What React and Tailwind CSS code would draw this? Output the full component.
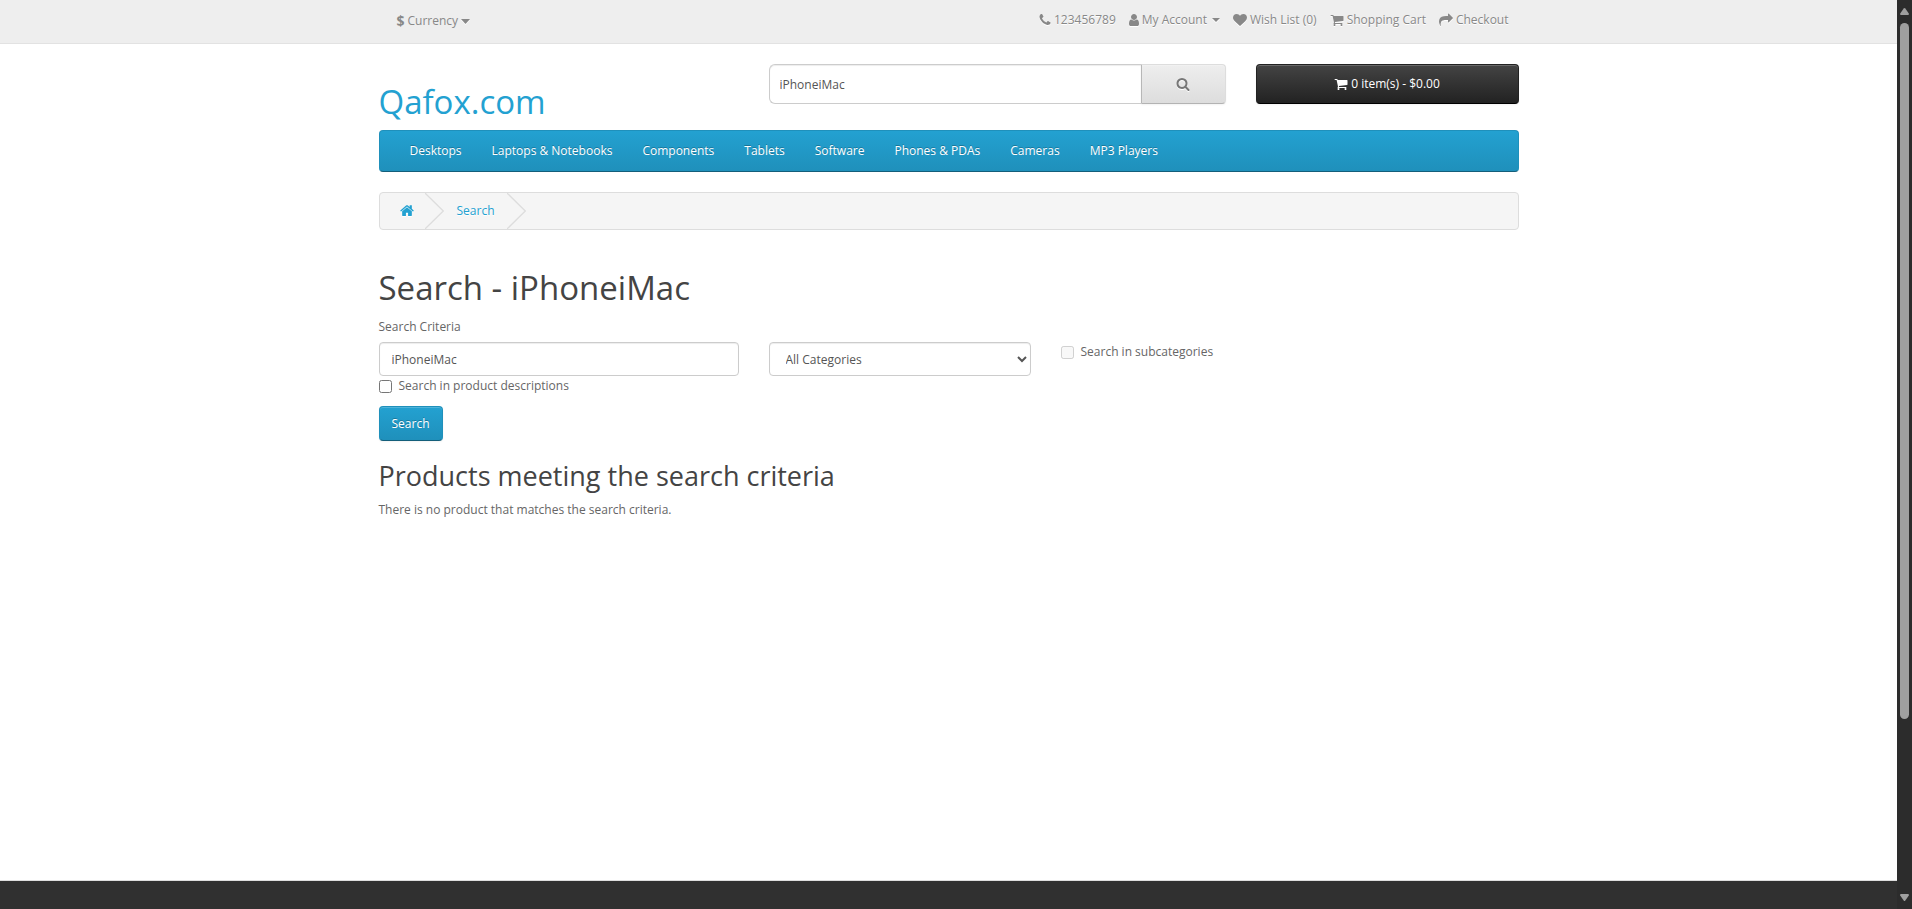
import React from "react";

const PATHS = {
  phone:
    "M1408 1112q0 27-10 70.5t-21 68.5q-21 50-122 106-94 51-186 51-27 0-53-3.5t-57.5-12.5-47-14.5-55.5-20.5-49-18q-98-35-175-83-127-79-264-216t-216-264q-48-77-83-175-3-9-18-49t-20.5-55.5-14.5-47-12.5-57.5-3.5-53q0-92 51-186 56-101 106-122 25-11 68.5-21t70.5-10q14 0 21 3 18 6 53 76 11 19 30 54t35 63.5 31 53.5q3 4 17.5 25t21.5 35.5 7 28.5q0 20-28.5 50t-62 55-62 53-28.5 46q0 9 5 22.5t8.5 20.5 14 24 11.5 19q76 137 174 235t235 174q2 1 19 11.5t24 14 20.5 8.5 22.5 5q18 0 46-28.5t53-62 55-62 50-28.5q14 0 28.5 7t35.5 21.5 25 17.5q25 15 53.5 31t63.5 35 54 30q70 35 76 53 3 7 3 21z",
  user: "M1536 1399q0 109-62.5 187t-150.5 78h-854q-88 0-150.5-78t-62.5-187q0-85 8.5-160.5t31.5-152 58.5-131 94-89 134.5-34.5q131 128 313 128t313-128q76 0 134.5 34.5t94 89 58.5 131 31.5 152 8.5 160.5zm-256-887q0 159-112.5 271.5t-271.5 112.5-271.5-112.5-112.5-271.5 112.5-271.5 271.5-112.5 271.5 112.5 112.5 271.5z",
  heart:
    "M896 1664q-26 0-44-18l-624-602q-10-8-27.5-26t-55.5-65.5-68-97.5-53.5-121-23.5-138q0-220 127-344t351-124q62 0 126.5 21.5t120 58 95.5 68.5 76 68q36-36 76-68t95.5-68.5 120-58 126.5-21.5q224 0 351 124t127 344q0 221-229 450l-623 600q-18 18-44 18z",
  cart: "M704 1536q0 52-38 90t-90 38-90-38-38-90 38-90 90-38 90 38 38 90zm896 0q0 52-38 90t-90 38-90-38-38-90 38-90 90-38 90 38 38 90zm128-1088v512q0 24-16.5 42.5t-40.5 21.5l-1044 122q13 60 13 70 0 16-24 64h920q26 0 45 19t19 45-19 45-45 19h-1024q-26 0-45-19t-19-45q0-11 8-31.5t16-36 21.5-40 15.5-29.5l-177-823h-204q-26 0-45-19t-19-45 19-45 45-19h256q16 0 28.5 6.5t19.5 15.5 13 24.5 8 26 5.5 29.5 4.5 26h1201q26 0 45 19t19 45z",
  share:
    "M1792 640q0 26-19 45l-512 512q-19 19-45 19t-45-19-19-45v-256h-224q-98 0-175.5 6t-154 21.5-133 42.5-105.5 69.5-80 101-48.5 138.5-17.5 181q0 55 5 123 0 6 2.5 23.5t2.5 26.5q0 15-8.5 25t-23.5 10q-16 0-28-17-7-9-13-22t-13.5-30-10.5-24q-127-285-127-451 0-199 53-333 162-403 875-403h224v-256q0-26 19-45t45-19 45 19l512 512q19 19 19 45z",
  search:
    "M1216 832q0-185-131.5-316.5t-316.5-131.5-316.5 131.5-131.5 316.5 131.5 316.5 316.5 131.5 316.5-131.5 131.5-316.5zm512 832q0 52-38 90t-90 38q-54 0-90-38l-343-342q-179 124-399 124-143 0-273.5-55.5t-225-150-150-225-55.5-273.5 55.5-273.5 150-225 225-150 273.5-55.5 273.5 55.5 225 150 150 225 55.5 273.5q0 220-124 399l343 343q37 37 37 90z",
  home: "M1472 992v480q0 26-19 45t-45 19h-384v-384h-256v384h-384q-26 0-45-19t-19-45v-480q0-1 .5-3t.5-3l575-474 575 474q1 2 1 6zm223-69l-62 74q-8 9-21 11h-3q-13 0-21-7l-692-577-692 577q-12 8-24 7-13-2-21-11l-62-74q-8-10-7-23.5t11-21.5l719-599q32-26 76-26t76 26l244 204v-195q0-14 9-23t23-9h192q14 0 23 9t9 23v408l219 182q10 8 11 21.5t-7 23.5z",
};

const BOXES = {
  phone: "0 -128 1408 1792",
  user: "256 0 1280 1792",
  heart: "0 0 1792 1792",
  cart: "0 0 1792 1792",
  share: "0 0 1792 1792",
  search: "0 128 1792 1792",
  home: "64 0 1664 1664",
};

function Icon({ name, className = "" }) {
  return (
    <svg viewBox={BOXES[name]} className={`h-3.5 shrink-0 fill-current ${className}`} aria-hidden="true">
      <path d={PATHS[name]} />
    </svg>
  );
}

const glow = "drop-shadow-[0_1px_0_#ffffff]";

const topLinks = [
  { icon: "phone", label: "123456789", width: "w-3" },
  { icon: "user", label: "My Account", width: "w-2.5", caret: true },
  { icon: "heart", label: "Wish List (0)", width: "w-3.5" },
  { icon: "cart", label: "Shopping Cart", width: "w-3.5" },
  { icon: "share", label: "Checkout", width: "w-3.5" },
];

const categories = [
  "Desktops",
  "Laptops & Notebooks",
  "Components",
  "Tablets",
  "Software",
  "Phones & PDAs",
  "Cameras",
  "MP3 Players",
];

function Chevron() {
  return (
    <svg viewBox="0 0 19 36" className="h-9 w-[19px] fill-none stroke-[#dddddd] stroke-[1.3]" aria-hidden="true">
      <path d="M0 0 L18.3 18 L0 36" />
    </svg>
  );
}

function TopBar() {
  return (
    <div className="border-b border-[#e2e2e2] bg-[#eeeeee] text-[#888888]">
      <div className="mx-auto flex h-[43px] w-full max-w-[1140px] justify-between pr-2.5 pl-[18px] [text-shadow:0_1px_0_#ffffff]">
        <button type="button" className="flex h-10 items-center gap-[3px] pt-0.5">
          <strong className="text-sm leading-5 font-bold">$</strong>
          <span>Currency</span>
          <svg viewBox="0 0 9 5" className={`h-[5px] w-[9px] fill-current ${glow}`} aria-hidden="true">
            <path d="M0 0H9L5 4.5Q4.5 5 4 4.5Z" />
          </svg>
        </button>
        <nav className="flex h-10 items-center gap-[13px]">
          {topLinks.map((l) => (
            <a key={l.label} href="#" className="flex items-center gap-[3px]">
              <Icon name={l.icon} className={`${l.width} ${glow}`} />
              <span>{l.label}</span>
              {l.caret && (
                <svg viewBox="0 0 8 4" className={`ml-0.5 h-1 w-2 fill-current ${glow}`} aria-hidden="true">
                  <path d="M0 0H8L4 4Z" />
                </svg>
              )}
            </a>
          ))}
        </nav>
      </div>
    </div>
  );
}

function Header() {
  return (
    <header className="grid grid-cols-[360fr_457fr_263fr] gap-[30px] pt-5">
      <h1 className="flex h-[66px] items-end text-[33px] leading-9 text-[#23a1d1]">
        <a href="#" className="pb-2.5">Qafox.com</a>
      </h1>
      <form className="flex h-10" onSubmit={(e) => e.preventDefault()}>
        <input
          aria-label="Search"
          defaultValue="iPhoneiMac"
          className="min-w-0 flex-1 rounded-l-md border border-r-0 border-[#cccccc] bg-white px-2.5 pt-0.5 text-[#555555] shadow-[inset_0_1px_1px_rgba(0,0,0,0.075)] outline-none"
        />
        <button
          type="submit"
          aria-label="Search"
          className="flex w-[85px] items-center justify-center rounded-r border border-t-[#dddddd] border-r-[#dddddd] border-b-[#b3b3b3] border-l-[#b7b7b7] bg-linear-to-b from-[#eeeeee] to-[#dddddd] pt-0.5 text-[#777777] shadow-[inset_0_1px_0_rgba(255,255,255,0.2),0_1px_2px_rgba(0,0,0,0.05)]"
        >
          <Icon name="search" className={`w-3.5 ${glow}`} />
        </button>
      </form>
      <button
        type="button"
        className="flex h-10 items-center justify-center gap-[3px] rounded border border-[#222222] border-b-black bg-linear-to-b from-[#444444] to-[#222222] text-white shadow-[inset_0_1px_0_rgba(255,255,255,0.2),0_1px_2px_rgba(0,0,0,0.05)]"
      >
        <Icon name="cart" className="w-3.5" />
        <span>0 item(s) - $0.00</span>
      </button>
    </header>
  );
}

function CategoryMenu() {
  return (
    <nav className="flex h-[42px] items-center rounded border border-[#1f90bb] border-b-[#145e7a] bg-linear-to-b from-[#23a1d1] to-[#1f90bb] px-[15px] text-white [text-shadow:0_-1px_0_rgba(0,0,0,0.25)]">
      {categories.map((c) => (
        <a key={c} href="#" className="px-[15px]">
          {c}
        </a>
      ))}
    </nav>
  );
}

function Breadcrumb() {
  return (
    <ol className="mt-5 flex h-[38px] items-center rounded border border-[#dddddd] bg-[#f5f5f5] pl-5 text-[#23a1d1]">
      <li className="flex items-center gap-[11px]">
        <a href="#" aria-label="Home" className={`pb-[3px] ${glow}`}>
          <Icon name="home" className="w-3.5" />
        </a>
        <Chevron />
      </li>
      <li className="flex items-center gap-3 pl-[13px]">
        <a href="#" className="[text-shadow:0_1px_0_#ffffff]">Search</a>
        <Chevron />
      </li>
    </ol>
  );
}

const field =
  "h-[34px] w-full rounded border border-[#cccccc] bg-white text-[#555555] shadow-[inset_0_1px_1px_rgba(0,0,0,0.075)] outline-none";

function SearchPage() {
  return (
    <main className="mt-10">
      <h1 className="text-[33px] leading-9 text-[#444444]">Search - iPhoneiMac</h1>
      <form onSubmit={(e) => e.preventDefault()}>
        <label htmlFor="criteria" className="mt-[11px] block pb-[5px]">
          Search Criteria
        </label>
        <div className="grid grid-cols-[360fr_262fr_458fr] items-start gap-[30px]">
          <input id="criteria" defaultValue="iPhoneiMac" className={`${field} px-3`} />
          <select aria-label="Category" className={`${field} px-3`}>
            <option>All Categories</option>
          </select>
          <label className="flex items-center gap-[7px]">
            <input type="checkbox" disabled className="size-[13px]" />
            Search in subcategories
          </label>
        </div>
        <label className="flex w-fit items-center gap-[7px]">
          <input type="checkbox" className="size-[13px]" />
          Search in product descriptions
        </label>
        <button
          type="submit"
          className="mt-2.5 h-[35px] rounded border border-[#1f90bb] border-b-[#145e7a] bg-linear-to-b from-[#23a1d1] to-[#1f90bb] px-3 text-white shadow-[inset_0_1px_0_rgba(255,255,255,0.2),0_1px_2px_rgba(0,0,0,0.05)] [text-shadow:0_-1px_0_rgba(0,0,0,0.25)]"
        >
          Search
        </button>
      </form>
      <h2 className="mt-5 text-[27px] leading-[30px] text-[#444444]">Products meeting the search criteria</h2>
      <p className="mt-[9px]">There is no product that matches the search criteria.</p>
    </main>
  );
}

function ScrollTrack() {
  return (
    <div className="flex w-[15px] shrink-0 flex-col items-center bg-[#2c2c2c] pt-2 pb-2" aria-hidden="true">
      <svg viewBox="0 0 9 7" className="h-[7px] w-[9px] fill-[#9f9f9f]">
        <path d="M3.7 0.6Q4.5-0.4 5.3 0.6L8.8 5.6Q9.2 7 8 7H1Q-0.2 7 0.2 5.6Z" />
      </svg>
      <div className="mt-2 flex w-[9px] flex-1 flex-col">
        <div className="flex-[695] rounded-full bg-[#9f9f9f]" />
        <div className="flex-[175]" />
      </div>
      <svg viewBox="0 0 9 7" className="h-[7px] w-[9px] fill-[#9f9f9f]">
        <path d="M3.7 6.4Q4.5 7.4 5.3 6.4L8.8 1.4Q9.2 0 8 0H1Q-0.2 0 0.2 1.4Z" />
      </svg>
    </div>
  );
}

export default function App() {
  return (
    <div className="flex min-h-screen bg-white font-['Open_Sans',sans-serif] text-xs leading-5 text-[#666666]">
      <div className="flex min-w-0 flex-1 flex-col">
        <TopBar />
        <div className="mx-auto w-full max-w-[1140px] flex-1">
          <Header />
          <CategoryMenu />
          <Breadcrumb />
          <SearchPage />
        </div>
        <footer className="h-[29px] border-t border-[#dddddd] bg-[#303030]" />
      </div>
      <ScrollTrack />
    </div>
  );
}
